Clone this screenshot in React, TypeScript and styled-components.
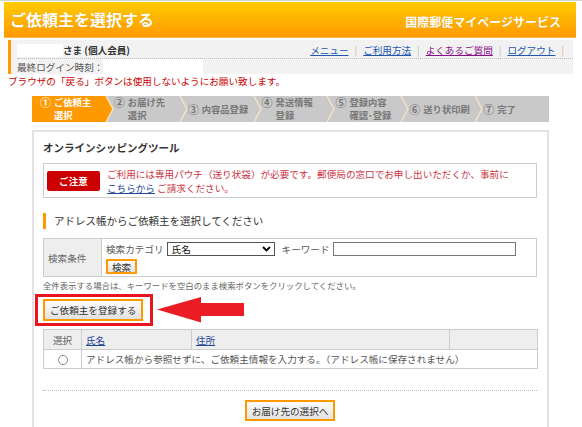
import styled, { createGlobalStyle } from 'styled-components';

const GlobalStyle = createGlobalStyle`
  body {
    margin: 0;
    background: #fff;
    font-family: "Noto Sans CJK JP", "Noto Sans", sans-serif;
    color: #555;
  }
`;

const Page = styled.div`
  width: 582px;
  height: 427px;
  overflow: hidden;
  border-top: 1px solid #d4d4d4;
  box-sizing: border-box;
`;

const Header = styled.header`
  margin: 1px 6px 0 4px;
  height: 36px;
  background: linear-gradient(#ffcc00, #ff9900);
  border-bottom: 1px solid #f7b54a;
  box-sizing: border-box;
  display: flex;
  align-items: center;
  justify-content: space-between;
  padding: 0 15px 0 6px;
  color: #fff;
  font-weight: bold;
`;

const Title = styled.h1`
  margin: 0 0 2px;
  font-size: 16px;
  line-height: 20px;
  text-shadow: 0 0 1px rgba(160, 90, 0, 0.35);
`;

const Service = styled.div`
  font-size: 12px;
  line-height: 16px;
  margin-top: 4px;
  text-shadow: 0 0 1px rgba(160, 90, 0, 0.35);
`;

const InfoBox = styled.div`
  margin: 2px 9px 0 8px;
  height: 34px;
  box-sizing: border-box;
  background: #f2f2f2;
  border-left: 3px solid #ff9900;
  padding: 2px 0 0 6px;
  font-size: 9.6px;
`;

const InfoTop = styled.div`
  display: flex;
  align-items: center;
  justify-content: space-between;
  height: 16px;
  border-bottom: 1px dotted #bbb;
  padding-right: 3px;
`;

const InfoBottom = styled.div`
  display: flex;
  align-items: center;
  height: 15px;
`;

const Mask = styled.span<{ w: number; h: number }>`
  display: inline-block;
  width: ${p => p.w}px;
  height: ${p => p.h}px;
  background: #fff;
`;

const UserName = styled.span`
  display: flex;
  align-items: center;
  font-weight: bold;
  color: #333;
`;

const Nav = styled.nav`
  display: flex;
  align-items: center;
`;

const NavLink = styled.a<{ visited?: boolean }>`
  color: ${p => (p.visited ? '#8a0f8a' : '#2356b0')};
  text-decoration: underline;
  cursor: pointer;
`;

const Sep = styled.span<{ last?: boolean }>`
  color: ${p => (p.last ? '#f4a0a0' : '#bbb')};
  margin: 0 6px;
`;

const Warning = styled.p`
  margin: 0 8px;
  padding-top: 1px;
  font-size: 9.6px;
  line-height: 12px;
  color: #cc0000;
`;

const Steps = styled.ol`
  list-style: none;
  margin: 9px 33px 0 32px;
  padding: 0;
  height: 26px;
  display: flex;
`;

const Step = styled.li<{ active?: boolean }>`
  flex: 1;
  position: relative;
  display: flex;
  align-items: center;
  padding-left: 8px;
  background: ${p => (p.active ? '#ff9900' : '#c9c9c9')};
  color: ${p => (p.active ? '#fff' : '#777')};
  font-size: 9.3px;
  font-weight: bold;
  line-height: 13px;
`;

const StepNum = styled.span<{ multi?: boolean }>`
  align-self: ${p => (p.multi ? 'flex-start' : 'center')};
  font-size: 11px;
  line-height: 13px;
  margin-right: 3px;
`;

const StepLabel = styled.span`
  display: flex;
  flex-direction: column;
`;

const Chevron = styled.svg`
  position: absolute;
  right: -8px;
  top: 0;
  z-index: 1;
  overflow: visible;
`;

const Panel = styled.section`
  margin: 8px 33px 0 32px;
  border: 2px solid #e2e2e2;
  border-bottom: none;
  padding: 9px 10px 20px 9px;
  font-size: 9.6px;
  line-height: 14px;
`;

const PanelTitle = styled.h2`
  margin: 0;
  font-size: 10.5px;
  line-height: 14px;
  color: #333;
`;

const Notice = styled.div`
  margin-top: 8px;
  height: 35px;
  box-sizing: border-box;
  border: 1px solid #ccc;
  display: flex;
  align-items: center;
  gap: 7px;
  padding: 0 3px;
`;

const Badge = styled.span`
  flex-shrink: 0;
  width: 53px;
  height: 20px;
  border-radius: 2px;
  background: #cc0000;
  color: #fff;
  font-weight: bold;
  display: flex;
  align-items: center;
  justify-content: center;
`;

const NoticeText = styled.p`
  margin: 0;
  color: #cc3344;
  line-height: 14px;
`;

const Link = styled.a`
  color: #23489a;
  text-decoration: underline;
  cursor: pointer;
`;

const SectionHeading = styled.h3`
  margin: 15px 0 9px;
  height: 16px;
  border-left: 3px solid #ff9900;
  padding-left: 8px;
  font-size: 10.5px;
  line-height: 16px;
  font-weight: normal;
  color: #333;
`;

const Table = styled.table`
  width: 100%;
  border-collapse: collapse;
  table-layout: fixed;
  font-size: 9.6px;
  line-height: 12px;

  th, td {
    border: 1px solid #ccc;
  }
`;

const HeadCell = styled.th<{ center?: boolean }>`
  background: #eeeeee;
  font-weight: normal;
  color: #666;
  text-align: ${p => (p.center ? 'center' : 'left')};
  padding: 0 0 0 ${p => (p.center ? 0 : 4)}px;
  height: 19px;
`;

const Cell = styled.td<{ center?: boolean }>`
  text-align: ${p => (p.center ? 'center' : 'left')};
  padding: 0 0 0 ${p => (p.center ? 0 : 4)}px;
  height: 18px;
  color: #555;
`;

const SearchCell = styled.td`
  padding: 3px 5px 2px 4px;
`;

const SearchLine = styled.div`
  display: flex;
  align-items: center;
  height: 14px;
`;

const SelectWrap = styled.span`
  position: relative;
  margin-left: 3px;
  display: inline-flex;
`;

const Select = styled.select`
  appearance: none;
  width: 108px;
  height: 14px;
  border: 1px solid #555;
  border-radius: 0;
  background: #fff;
  font: inherit;
  font-size: 9.6px;
  line-height: 12px;
  color: #111;
  padding: 0 0 0 4px;
`;

const SelectArrow = styled.svg`
  position: absolute;
  right: 4px;
  top: 4px;
  pointer-events: none;
`;

const KeywordLabel = styled.span`
  margin-left: 7px;
`;

const TextInput = styled.input`
  margin-left: 3px;
  width: 183px;
  height: 14px;
  box-sizing: border-box;
  border: 1px solid #777;
  padding: 0;
`;

const Button = styled.button<{ h: number }>`
  height: ${p => p.h}px;
  box-sizing: border-box;
  border: 2px solid #ff9900;
  background: linear-gradient(#fcfcfc, #e2e2e2);
  color: #333;
  font: inherit;
  font-size: 9.6px;
  line-height: 12px;
  padding: 0 5px;
  cursor: pointer;
`;

const SearchButton = styled(Button)`
  margin-top: 3px;
  padding: 0 4px;
`;

const Hint = styled.p`
  margin: 2px 0 0;
  font-size: 8.4px;
  line-height: 12px;
  color: #666;
`;

const RegisterRow = styled.div`
  display: flex;
  align-items: center;
  margin: 3px 0 0 -8px;
`;

const RedFrame = styled.div`
  border: 3px solid #e8141e;
  padding: 2px 7px 2px 5px;
  display: flex;
`;

const Arrow = styled.svg`
  margin-left: 4px;
  flex-shrink: 0;
`;

const ListTable = styled(Table)`
  margin-top: 3px;
`;

const Radio = styled.input`
  appearance: none;
  width: 10px;
  height: 10px;
  margin: 0;
  border: 1px solid #888;
  border-radius: 50%;
  background: #fff;
  vertical-align: middle;
`;

const Divider = styled.hr`
  margin: 21px 0 0;
  border: none;
  border-top: 1px dotted #bbb;
`;

const NextRow = styled.div`
  display: flex;
  justify-content: center;
  padding-top: 9px;
`;

const STEPS = [
  { num: '①', label: ['ご依頼主', '選択'] },
  { num: '②', label: ['お届け先', '選択'] },
  { num: '③', label: ['内容品登録'] },
  { num: '④', label: ['発送情報', '登録'] },
  { num: '⑤', label: ['登録内容', '確認･登録'] },
  { num: '⑥', label: ['送り状印刷'] },
  { num: '⑦', label: ['完了'] },
];

export default function App() {
  return (
    <Page>
      <GlobalStyle />
      <Header>
        <Title>ご依頼主を選択する</Title>
        <Service>国際郵便マイページサービス</Service>
      </Header>

      <InfoBox>
        <InfoTop>
          <UserName>
            <Mask w={46} h={13} />
            さま (個人会員)
          </UserName>
          <Nav>
            <NavLink>メニュー</NavLink>
            <Sep>|</Sep>
            <NavLink>ご利用方法</NavLink>
            <Sep>|</Sep>
            <NavLink visited>よくあるご質問</NavLink>
            <Sep>|</Sep>
            <NavLink>ログアウト</NavLink>
            <Sep last>|</Sep>
          </Nav>
        </InfoTop>
        <InfoBottom>
          最終ログイン時刻：
          <Mask w={100} h={15} />
        </InfoBottom>
      </InfoBox>

      <Warning>ブラウザの「戻る」ボタンは使用しないようにお願い致します。</Warning>

      <Steps>
        {STEPS.map((s, i) => {
          const active = i === 0;
          return (
            <Step key={s.num} active={active}>
              <StepNum multi={s.label.length > 1}>{s.num}</StepNum>
              <StepLabel>
                {s.label.map(l => (
                  <span key={l}>{l}</span>
                ))}
              </StepLabel>
              {i < STEPS.length - 1 && (
                <Chevron width="8" height="26" viewBox="0 0 8 26">
                  <polygon points="0,0 7,13 0,26" fill={active ? '#ff9900' : '#c9c9c9'} />
                  <polyline points="0,0 7,13 0,26" fill="none" stroke="#f6e4c6" strokeWidth="1.4" />
                </Chevron>
              )}
            </Step>
          );
        })}
      </Steps>

      <Panel>
        <PanelTitle>オンラインシッピングツール</PanelTitle>

        <Notice>
          <Badge>ご注意</Badge>
          <NoticeText>
            ご利用には専用パウチ（送り状袋）が必要です。郵便局の窓口でお申し出いただくか、事前に
            <br />
            <Link>こちらから</Link> ご請求ください。
          </NoticeText>
        </Notice>

        <SectionHeading>アドレス帳からご依頼主を選択してください</SectionHeading>

        <Table>
          <tbody>
            <tr>
              <HeadCell style={{ width: 53 }}>検索条件</HeadCell>
              <SearchCell>
                <SearchLine>
                  検索カテゴリ
                  <SelectWrap>
                    <Select defaultValue="name">
                      <option value="name">氏名</option>
                    </Select>
                    <SelectArrow width="9" height="6" viewBox="0 0 9 6">
                      <polyline points="1,1 4.5,4.5 8,1" fill="none" stroke="#000" strokeWidth="1.8" />
                    </SelectArrow>
                  </SelectWrap>
                  <KeywordLabel>キーワード</KeywordLabel>
                  <TextInput type="text" />
                </SearchLine>
                <SearchButton h={15}>検索</SearchButton>
              </SearchCell>
            </tr>
          </tbody>
        </Table>
        <Hint>全件表示する場合は、キーワードを空白のまま検索ボタンをクリックしてください。</Hint>

        <RegisterRow>
          <RedFrame>
            <Button h={22}>ご依頼主を登録する</Button>
          </RedFrame>
          <Arrow width="87" height="26" viewBox="0 0 87 26">
            <polygon points="0,12.5 44,0 44,6 87,6 87,19 44,19 44,25.5" fill="#ec1c24" />
          </Arrow>
        </RegisterRow>

        <ListTable>
          <colgroup>
            <col style={{ width: 38 }} />
            <col style={{ width: 110 }} />
            <col style={{ width: 258 }} />
            <col style={{ width: 88 }} />
          </colgroup>
          <thead>
            <tr>
              <HeadCell center>選択</HeadCell>
              <HeadCell><Link>氏名</Link></HeadCell>
              <HeadCell><Link>住所</Link></HeadCell>
              <HeadCell />
            </tr>
          </thead>
          <tbody>
            <tr>
              <Cell center>
                <Radio type="radio" name="sender" />
              </Cell>
              <Cell colSpan={3}>
                アドレス帳から参照せずに、ご依頼主情報を入力する。（アドレス帳に保存されません）
              </Cell>
            </tr>
          </tbody>
        </ListTable>

        <Divider />
        <NextRow>
          <Button h={21}>お届け先の選択へ</Button>
        </NextRow>
      </Panel>
    </Page>
  );
}
